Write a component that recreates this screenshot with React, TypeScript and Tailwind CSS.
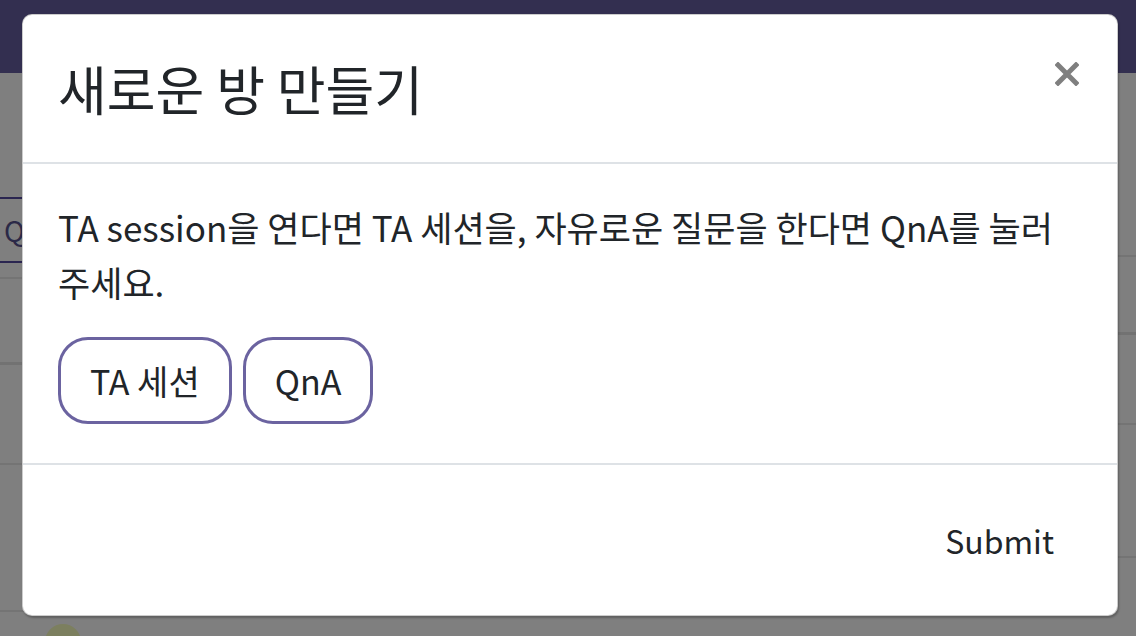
import React from 'react';

const FONT = { fontFamily: '"Noto Sans CJK KR", "Noto Sans", sans-serif' };

const CloseIcon: React.FC = () => (
  <svg width="24" height="24" viewBox="0 0 24 24" aria-hidden="true">
    <path d="M3 3 L21 21 M21 3 L3 21" stroke="#7f7f7f" strokeWidth="5" strokeLinecap="square" />
  </svg>
);

const BackgroundPage: React.FC = () => (
  <div className="flex h-full flex-col bg-white">
    <div className="h-[73px] shrink-0 bg-[#665ea0]" />
    <div className="flex flex-1">
      {/* left column */}
      <div className="flex w-[420px] flex-col">
        <div className="h-[124px]" />
        <div className="flex h-[66px] items-center border-y-2 border-[#544aa0] pl-[4px] text-[28px] text-[#57538f]">
          Q
        </div>
        <div className="h-[16px] border-b-2 border-[#e8e8e8]" />
        <div className="h-[86px] border-b-[3px] border-[#e4e4e4]" />
        <div className="h-[100px] border-b-2 border-[#e8e8e8]" />
        <div className="h-[147px] border-b-2 border-[#e8e8e8]" />
        <div className="flex items-start pl-[45px] pt-[12px]">
          <div className="h-[36px] w-[36px] rounded-full bg-[#f8ffbe]" />
        </div>
      </div>
      {/* right column */}
      <div className="flex flex-1 flex-col">
        <div className="h-[184px] border-b-2 border-[#e8e8e8]" />
        <div className="h-[78px] border-b-[3px] border-[#e4e4e4]" />
        <div className="h-[90px] border-b-2 border-[#e8e8e8]" />
        <div className="h-[133px] border-b-2 border-[#e8e8e8]" />
      </div>
    </div>
  </div>
);

const App: React.FC = () => {
  return (
    <div className="relative h-[636px] w-[1136px] overflow-hidden" style={FONT}>
      <BackgroundPage />

      <div className="absolute inset-0 bg-black/50">
        <div className="ml-[22px] mt-[14px] flex h-[602px] w-[1096px] flex-col rounded-[10px] border border-black/20 bg-white shadow-[1px_2px_2px_rgba(0,0,0,0.25)]">
          <div className="flex h-[149px] shrink-0 items-center justify-between border-b-2 border-[#dee2e6] pl-[35px] pr-[38px]">
            <h5 className="text-[53px] font-normal leading-none text-[#212529]">새로운 방 만들기</h5>
            <button type="button" className="mb-[30px] flex h-[24px] w-[24px] items-center justify-center" aria-label="Close">
              <CloseIcon />
            </button>
          </div>

          <div className="flex-1 px-[35px] pt-[35px]">
            <p className="text-[35px] leading-[55px] text-[#212529]">
              TA session을 연다면 TA 세션을, 자유로운 질문을 한다면 QnA를 눌러 주세요.
            </p>
            <div className="mt-[28px] flex gap-[11px]">
              <button
                type="button"
                className="flex h-[87px] items-center rounded-[30px] border-[3px] border-[#6b63a0] px-[29px] text-[34px] text-[#212529]"
              >
                TA 세션
              </button>
              <button
                type="button"
                className="flex h-[87px] items-center rounded-[30px] border-[3px] border-[#6b63a0] px-[29px] text-[34px] text-[#212529]"
              >
                QnA
              </button>
            </div>
          </div>

          <div className="flex h-[152px] shrink-0 items-center justify-end border-t-2 border-[#dee2e6] pr-[63px]">
            <button type="button" className="text-[32px] text-[#212529]">
              Submit
            </button>
          </div>
        </div>
      </div>
    </div>
  );
};

export default App;
